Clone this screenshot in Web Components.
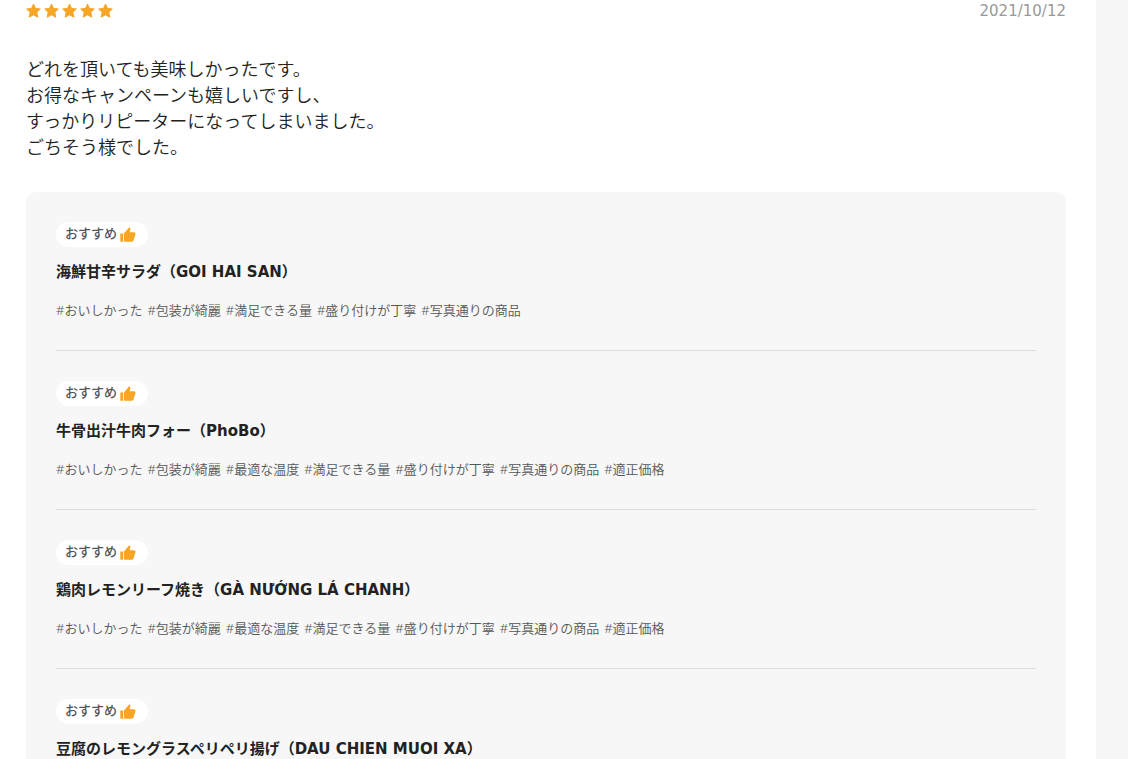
<!DOCTYPE html>
<html lang="ja">
<head>
<meta charset="utf-8">
<title>レビュー</title>
<style>
  body {
    margin: 0;
    background: #f7f7f7;
    color: #222;
    font-family: "DejaVu Sans", "Noto Sans CJK JP", sans-serif;
  }
</style>
</head>
<body>
<review-page>
  <review-entry date="2021/10/12" rating="5">
    <span slot="comment">どれを頂いても美味しかったです。<br>お得なキャンペーンも嬉しいですし、<br>すっかりリピーターになってしまいました。<br>ごちそう様でした。</span>
    <review-item tags="おいしかった 包装が綺麗 満足できる量 盛り付けが丁寧 写真通りの商品">海鮮甘辛サラダ（GOI HAI SAN）</review-item>
    <review-item tags="おいしかった 包装が綺麗 最適な温度 満足できる量 盛り付けが丁寧 写真通りの商品 適正価格">牛骨出汁牛肉フォー（PhoBo）</review-item>
    <review-item tags="おいしかった 包装が綺麗 最適な温度 満足できる量 盛り付けが丁寧 写真通りの商品 適正価格">鶏肉レモンリーフ焼き（GÀ NƯỚNG LÁ CHANH）</review-item>
    <review-item>豆腐のレモングラスペリペリ揚げ（DAU CHIEN MUOI XA）</review-item>
  </review-entry>
</review-page>
<script>
  class ReviewPage extends HTMLElement {
    constructor() {
      super();
      this.attachShadow({ mode: "open" }).innerHTML = `
        <style>
          :host { display: block; height: 100vh; overflow: hidden; }
          main { min-height: 100vh; margin-right: 32px; padding: 0 30px 0 26px; box-sizing: border-box; background: #fff; }
        </style>
        <main><slot></slot></main>`;
    }
  }

  class StarRating extends HTMLElement {
    constructor() {
      super();
      this.attachShadow({ mode: "open" });
    }
    connectedCallback() {
      const count = Number(this.getAttribute("value"));
      const star = `<svg viewBox="0 0 16 16" aria-hidden="true"><path d="M7.5 1.1 9.5 5.4 14.3 6 10.8 9.3 11.8 14.2 7.5 11.8 3.2 14.2 4.2 9.3 .7 6 5.5 5.4Z" fill="#f7a525" stroke="#f7a525" stroke-width="1" stroke-linejoin="round"/></svg>`;
      this.shadowRoot.innerHTML = `
        <style>
          :host { display: flex; gap: 2px; }
          svg { display: block; width: 16px; height: 16px; }
        </style>${star.repeat(count)}`;
    }
  }

  class RecommendBadge extends HTMLElement {
    constructor() {
      super();
      this.attachShadow({ mode: "open" }).innerHTML = `
        <style>
          :host { display: flex; align-items: center; gap: 3px; width: fit-content; height: 25px; padding: 0 12px 0 9px; box-sizing: border-box; border-radius: 13px; background: #fff; color: #555; font-size: 13px; font-weight: 500; line-height: 22px; }
          span { padding-bottom: 2px; }
          svg { display: block; width: 16px; height: 16px; }
        </style>
        <span><slot></slot></span>
        <svg viewBox="0 0 16 16" aria-hidden="true"><g fill="#f7a525"><path d="M.3 6.4H3.2V14.8H1.2Q.3 14.8 .3 13.9Z"/><path d="M4 6.4 8.6 .9Q9.2 .1 10 .7 10.6 1.2 10.4 2L9.7 5.2H14Q15.8 5.3 15.5 7.1L13.6 13.3Q13.1 14.8 11.6 14.8H5.2Q4 14.8 4 13.6Z"/></g></svg>`;
    }
  }

  class ReviewItem extends HTMLElement {
    constructor() {
      super();
      this.attachShadow({ mode: "open" });
    }
    connectedCallback() {
      const tags = (this.getAttribute("tags") || "").split(" ").filter(Boolean);
      this.shadowRoot.innerHTML = `
        <style>
          :host { display: block; padding: 30px 0; border-bottom: 1px solid #ddd; }
          :host(:last-of-type) { border-bottom: 0; }
          h3 { margin: 14px 0 18px; font-size: 15px; line-height: 22px; font-weight: 700; }
          ul { display: flex; flex-wrap: wrap; column-gap: 5px; min-height: 18px; margin: 0 0 1px; padding: 0; list-style: none; color: #555; font-family: "Noto Sans", "Noto Sans CJK JP", sans-serif; font-size: 13px; line-height: 18px; font-weight: 350; }
        </style>
        <recommend-badge>おすすめ</recommend-badge>
        <h3><slot></slot></h3>
        <ul>${tags.map(tag => `<li>#${tag}</li>`).join("")}</ul>`;
    }
  }

  class ReviewEntry extends HTMLElement {
    constructor() {
      super();
      this.attachShadow({ mode: "open" });
    }
    connectedCallback() {
      const date = this.getAttribute("date");
      this.shadowRoot.innerHTML = `
        <style>
          :host { display: block; }
          header { display: flex; justify-content: space-between; align-items: center; height: 22px; }
          time { color: #999; font-size: 15px; line-height: 22px; }
          p { margin: 33px 0; font-family: "Noto Sans CJK JP", sans-serif; font-size: 18px; line-height: 26px; font-weight: 350; }
          section { padding: 0 30px; border-radius: 10px; background: #f7f7f7; }
        </style>
        <article>
          <header>
            <star-rating value="${this.getAttribute("rating")}" role="img" aria-label="5"></star-rating>
            <time datetime="${date.replaceAll("/", "-")}">${date}</time>
          </header>
          <p><slot name="comment"></slot></p>
          <section><slot></slot></section>
        </article>`;
    }
  }

  customElements.define("star-rating", StarRating);
  customElements.define("recommend-badge", RecommendBadge);
  customElements.define("review-item", ReviewItem);
  customElements.define("review-entry", ReviewEntry);
  customElements.define("review-page", ReviewPage);
</script>
</body>
</html>
